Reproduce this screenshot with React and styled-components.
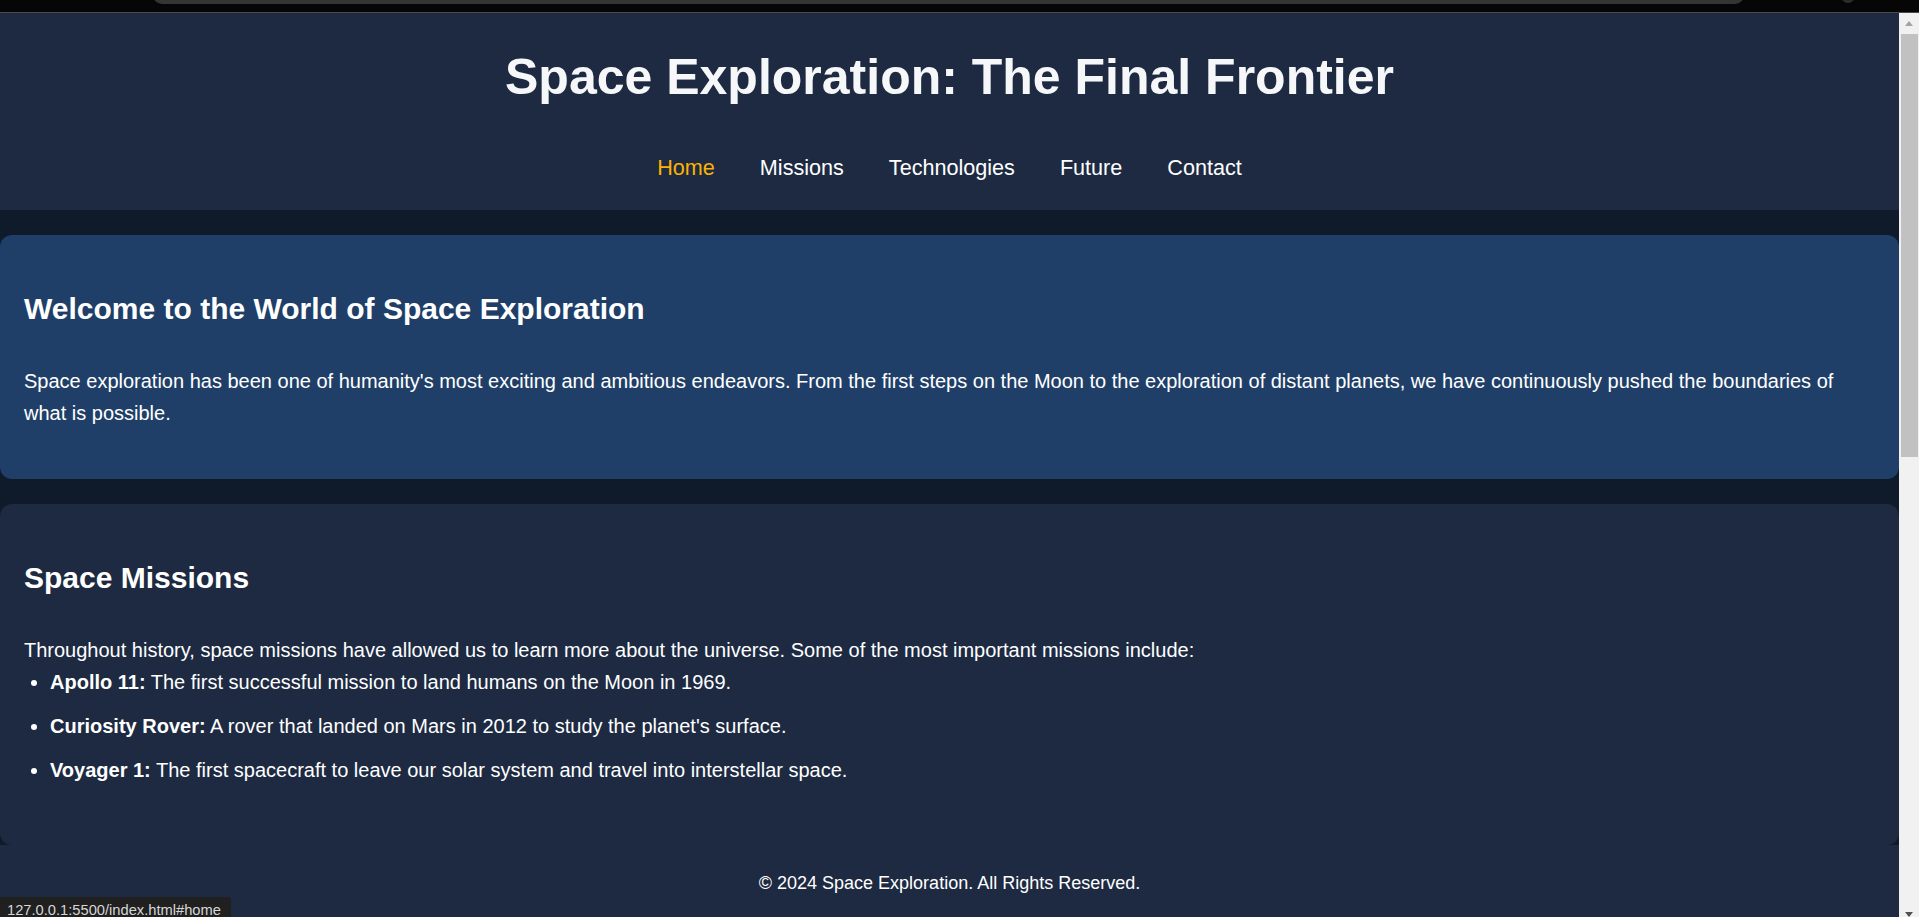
import styled, { createGlobalStyle } from "styled-components";

// === Global ===
const GlobalStyle = createGlobalStyle`
  html, body {
    margin: 0;
    height: 100%;
    overflow: hidden;
    font-family: "Liberation Sans", Arial, sans-serif;
  }
  #root {
    height: 100%;
  }
`;

// === Browser chrome ===
const Window = styled.div`
  height: 100vh;
  display: flex;
  flex-direction: column;
  overflow: hidden;
  position: relative;
`;

const BrowserStrip = styled.div`
  height: 12px;
  flex-shrink: 0;
  background: #060606;
  border-bottom: 1px solid #4a4a4a;
  display: flex;
  align-items: flex-start;
  padding-left: 153px;
  overflow: hidden;
`;

const AddressBar = styled.div`
  width: 1591px;
  height: 18px;
  margin-top: -14px;
  border-radius: 14px;
  background: #353535;
`;

const ProfileDot = styled.div`
  width: 14px;
  height: 14px;
  margin-top: -11px;
  margin-left: 97px;
  border-radius: 50%;
  background: #2c2c2c;
`;

const Viewport = styled.div`
  flex: 1;
  min-height: 0;
  display: flex;
  overflow: hidden;
`;

const Scrollbar = styled.div`
  width: 20px;
  flex-shrink: 0;
  height: calc(100% + 8px);
  background: #f1f1f1;
  display: flex;
  flex-direction: column;
`;

const ScrollButton = styled.div`
  height: 21px;
  display: flex;
  align-items: center;
  justify-content: center;
  margin-top: ${({ $down }) => ($down ? "auto" : "0")};

  &::after {
    content: "";
    border-left: 4.5px solid transparent;
    border-right: 4.5px solid transparent;
    ${({ $down }) =>
      $down
        ? "border-top: 5px solid #505050;"
        : "border-bottom: 5px solid #a3a3a3;"}
  }
`;

const Thumb = styled.div`
  height: 423px;
  margin: 0 1px 0 2px;
  background: #c1c1c1;
`;

const StatusBar = styled.div`
  position: absolute;
  left: 0;
  bottom: -3px;
  height: 20px;
  padding: 3px 10px 0 7px;
  line-height: 20px;
  font-size: 14.7px;
  color: #d6d6d6;
  background: #202020;
  border-top-right-radius: 4px;
  white-space: nowrap;
`;

// === Page ===
const Page = styled.div`
  flex: 1;
  min-width: 0;
  overflow: hidden;
  background: #0f1a2a;
  color: #ffffff;
`;

const Header = styled.header`
  background: #1d2a42;
  padding: 36px 0 30px;
  text-align: center;
`;

const Title = styled.h1`
  margin: 0 0 49px;
  font-size: 50px;
  line-height: 57px;
  font-weight: 700;
  color: #f6f7f9;
`;

const Nav = styled.nav`
  display: flex;
  justify-content: center;
  gap: 45px;
`;

const NavLink = styled.a`
  font-size: 21.6px;
  line-height: 25px;
  text-decoration: none;
  color: ${({ $active }) => ($active ? "#fbb202" : "#ffffff")};
`;

const Main = styled.main`
  padding-top: 25px;
  display: flex;
  flex-direction: column;
  gap: 25px;
`;

const Card = styled.section`
  padding: 50px 24px ${({ $bottom }) => $bottom}px;
  border-radius: 12px;
  background: ${({ $highlight }) => ($highlight ? "#203f68" : "#1d2a42")};
`;

const CardTitle = styled.h2`
  margin: 0 0 32px;
  font-size: 30px;
  line-height: 48px;
  font-weight: 700;
`;

const Text = styled.p`
  margin: 0;
  font-size: 20px;
  line-height: 32px;
`;

const List = styled.ul`
  margin: 0;
  padding-left: 26px;
`;

const Item = styled.li`
  font-size: 20px;
  line-height: 32px;
  margin-bottom: 12px;

  strong {
    font-weight: 700;
  }
`;

const Footer = styled.footer`
  background: #1d2a42;
  padding: 28px 0;
  text-align: center;
  font-size: 18px;
  line-height: 21px;
`;

const links = ["Home", "Missions", "Technologies", "Future", "Contact"];

const missions = [
  ["Apollo 11:", "The first successful mission to land humans on the Moon in 1969."],
  ["Curiosity Rover:", "A rover that landed on Mars in 2012 to study the planet's surface."],
  ["Voyager 1:", "The first spacecraft to leave our solar system and travel into interstellar space."],
];

// === Main Component ===
export default function App() {
  return (
    <Window>
      <GlobalStyle />
      <BrowserStrip>
        <AddressBar />
        <ProfileDot />
      </BrowserStrip>

      <Viewport>
        <Page>
          <Header>
            <Title>Space Exploration: The Final Frontier</Title>
            <Nav>
              {links.map((link) => (
                <NavLink
                  key={link}
                  href={`#${link.toLowerCase()}`}
                  $active={link === "Home"}
                >
                  {link}
                </NavLink>
              ))}
            </Nav>
          </Header>

          <Main>
            <Card $highlight $bottom={50}>
              <CardTitle>Welcome to the World of Space Exploration</CardTitle>
              <Text>
                Space exploration has been one of humanity's most exciting and
                ambitious endeavors. From the first steps on the Moon to the
                exploration of distant planets, we have continuously pushed the
                boundaries of what is possible.
              </Text>
            </Card>

            <Card $bottom={47}>
              <CardTitle>Space Missions</CardTitle>
              <Text>
                Throughout history, space missions have allowed us to learn more
                about the universe. Some of the most important missions include:
              </Text>
              <List>
                {missions.map(([name, desc]) => (
                  <Item key={name}>
                    <strong>{name}</strong> {desc}
                  </Item>
                ))}
              </List>
            </Card>
          </Main>

          <Footer>© 2024 Space Exploration. All Rights Reserved.</Footer>
        </Page>

        <Scrollbar>
          <ScrollButton />
          <Thumb />
          <ScrollButton $down />
        </Scrollbar>
      </Viewport>

      <StatusBar>127.0.0.1:5500/index.html#home</StatusBar>
    </Window>
  );
}
